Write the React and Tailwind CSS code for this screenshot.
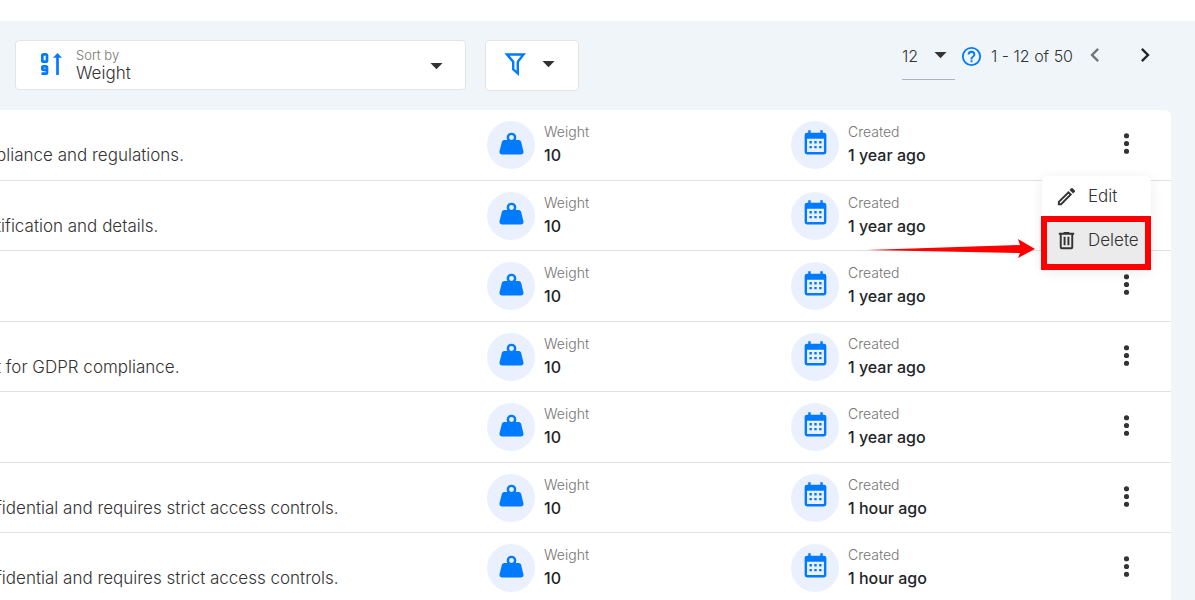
const rows = [
  { text: "pliance and regulations.", created: "1 year ago" },
  { text: "tification and details.", created: "1 year ago" },
  { text: "", created: "1 year ago" },
  { text: "t for GDPR compliance.", created: "1 year ago" },
  { text: "", created: "1 year ago" },
  { text: "fidential and requires strict access controls.", created: "1 hour ago" },
  { text: "fidential and requires strict access controls.", created: "1 hour ago" },
];

const paths = {
  weight:
    "M12 3a4 4 0 0 1 4 4c0 .73-.19 1.41-.54 2H18c.95 0 1.75.67 1.95 1.56C21.96 18.57 22 18.78 22 19a2 2 0 0 1-2 2H4a2 2 0 0 1-2-2c0-.22.04-.43 2.05-8.44C4.25 9.67 5.05 9 6 9h2.54A3.95 3.95 0 0 1 8 7a4 4 0 0 1 4-4m0 2a2 2 0 0 0 0 4 2 2 0 0 0 0-4z",
  calendar:
    "M9 10v2H7v-2h2m4 0v2h-2v-2h2m4 0v2h-2v-2h2m2-7a2 2 0 0 1 2 2v14a2 2 0 0 1-2 2H5a2 2 0 0 1-2-2V5a2 2 0 0 1 2-2h1V1h2v2h8V1h2v2h1m0 16V8H5v11h14M9 14v2H7v-2h2m4 0v2h-2v-2h2m4 0v2h-2v-2h2z",
  caret: "M7 10l5 5 5-5z",
  dots: "M12 16a2 2 0 1 1 0 4 2 2 0 0 1 0-4m0-6a2 2 0 1 1 0 4 2 2 0 0 1 0-4m0-6a2 2 0 1 1 0 4 2 2 0 0 1 0-4z",
  pencil:
    "M14.06 9l.94.94L5.92 19H5v-.92L14.06 9m3.6-6c-.25 0-.51.1-.7.29l-1.83 1.83 3.75 3.75 1.83-1.83c.39-.39.39-1.04 0-1.41l-2.34-2.34c-.2-.2-.45-.29-.71-.29m-3.6 3.19L3 17.25V21h3.75L17.81 9.94l-3.75-3.75z",
  trash:
    "M9 3v1H4v2h1v13a2 2 0 0 0 2 2h10a2 2 0 0 0 2-2V6h1V4h-5V3H9M7 6h10v13H7V6m2 2v9h2V8H9m4 0v9h2V8h-2z",
  help: "M11 18h2v-2h-2v2m1-16A10 10 0 0 0 2 12a10 10 0 0 0 10 10 10 10 0 0 0 10-10A10 10 0 0 0 12 2m0 18c-4.41 0-8-3.59-8-8s3.59-8 8-8 8 3.59 8 8-3.59 8-8 8m0-14a4 4 0 0 0-4 4h2a2 2 0 0 1 2-2 2 2 0 0 1 2 2c0 2-3 1.75-3 5h2c0-2.25 3-2.5 3-5a4 4 0 0 0-4-4z",
  left: "M15.41 16.58L10.83 12l4.58-4.59L14 6l-6 6 6 6 1.41-1.42z",
  right: "M8.59 16.58L13.17 12 8.59 7.41 10 6l6 6-6 6-1.41-1.42z",
};

function Icon({ name, className }) {
  return (
    <svg viewBox="0 0 24 24" fill="currentColor" fillRule="evenodd" aria-hidden="true" className={`shrink-0 ${className}`}>
      <path d={paths[name]} />
    </svg>
  );
}

function SortIcon() {
  return (
    <svg viewBox="0 0 22 24" fill="none" stroke="currentColor" strokeWidth="2.7" aria-hidden="true" className="mb-0.5 h-6 w-[22px] shrink-0 text-[#007bff]">
      <path d="M3.3 2.3h2.400q1.300 0 1.300 1.300v4.800q0 1.300-1.300 1.300H3.600q-1.300 0-1.300-1.300V3.600q0-1.300 1.300-1.300z" />
      <path d="M1.500 21.700h4.200q1.300 0 1.300-1.300v-4.800q0-1.300-1.300-1.300H3.600q-1.300 0-1.300 1.300v.9q0 1.300 1.300 1.300H7" />
      <path d="M17.500 23V4" />
      <path d="M13 5.800L17.500 1 22 5.800z" fill="currentColor" stroke="none" />
    </svg>
  );
}

function FilterIcon() {
  return (
    <svg viewBox="0 0 22 24" fill="none" stroke="currentColor" strokeWidth="2.4" aria-hidden="true" className="mb-[3px] h-6 w-[22px] shrink-0 text-[#007bff]">
      <path d="M3 2.500h16.500l-5.700 7.300v11.500L9.200 17.300V9.800z" strokeLinejoin="miter" />
    </svg>
  );
}

function Stat({ icon, label, value }) {
  return (
    <div className="flex gap-[9px] pt-[11px]">
      <span className="flex size-12 shrink-0 items-center justify-center rounded-full bg-[#eaf0fd] text-[#007bff]">
        <Icon name={icon} className="mb-1 size-[29px]" />
      </span>
      <dl>
        <dt className="text-sm leading-[22px] font-light text-[#757575]">{label}</dt>
        <dd className="text-base leading-6 font-medium text-[#212529]">{value}</dd>
      </dl>
    </div>
  );
}

function ActionMenu() {
  return (
    <div role="menu" className="absolute top-full right-5 z-10 -mt-1 w-[109px] rounded-md bg-white text-[17px] font-light text-[#333] shadow-[0_2px_14px_rgba(0,0,0,0.08)]">
      <button type="button" role="menuitem" className="flex h-10 w-full items-center gap-2.5 px-[13px] pt-0.5">
        <Icon name="pencil" className="size-[23px]" />
        Edit
      </button>
      <button type="button" role="menuitem" className="-ml-px flex h-[54px] w-[110px] items-center gap-2.5 border-[6px] border-[#ff0000] bg-[#ebebeb] pb-1 pl-2">
        <Icon name="trash" className="size-[23px]" />
        Delete
      </button>
      <svg viewBox="0 0 168 20" aria-hidden="true" className="absolute right-[116px] bottom-[11px] h-5 w-[168px]">
        <path d="M0 11L153 6l-2-6 17 10-17 9 2-5z" fill="#ff0000" />
      </svg>
    </div>
  );
}

export default function App() {
  return (
    <div className="h-screen overflow-hidden bg-white pt-[21px] font-['Inter',sans-serif] text-[#333]">
      <main className="min-h-full bg-[#f0f5fa] pr-6">
        <header className="flex items-start pt-[19px] pb-[19px] pl-[15px]">
          <div className="flex h-[50px] w-[451px] items-center rounded border border-[#e2e4e6] bg-white pl-6">
            <SortIcon />
            <div className="relative flex-1 pl-3.5">
              <label htmlFor="sort" className="block text-[13px] leading-4 font-light text-[#757575]">Sort by</label>
              <select id="sort" className="block w-full appearance-none bg-transparent text-[17px] leading-5 font-light outline-none">
                <option>Weight</option>
              </select>
              <Icon name="caret" className="pointer-events-none absolute top-1 right-3.5 size-[29px]" />
            </div>
          </div>
          <button type="button" aria-label="Filter" className="ml-[19px] flex h-[51px] w-[94px] items-center gap-2 rounded border border-[#e2e4e6] bg-white pl-[18px]">
            <FilterIcon />
            <Icon name="caret" className="mb-1 size-[29px]" />
          </button>
          <div className="ml-auto flex items-start text-base font-light">
            <div className="relative w-[53px] border-b border-[#adb5bd]">
              <select aria-label="Items per page" className="block h-[39px] w-full appearance-none bg-transparent pb-[7px] outline-none">
                <option>12</option>
              </select>
              <Icon name="caret" className="pointer-events-none absolute top-0 right-0 size-[29px]" />
            </div>
            <Icon name="help" className="mt-[5px] ml-[5px] size-[23px] text-[#007bff]" />
            <span className="ml-2 leading-8">1 - 12 of 50</span>
            <button type="button" aria-label="Previous page" className="mt-px ml-2 text-[#757575]">
              <Icon name="left" className="size-[28px]" />
            </button>
            <button type="button" aria-label="Next page" className="mt-px mr-3 ml-[22px] text-[#212529]">
              <Icon name="right" className="size-[28px]" />
            </button>
          </div>
        </header>

        <ul className="grid min-h-[494px] auto-rows-fr rounded-tr-md bg-white">
          {rows.map((row, i) => (
            <li key={i} className="relative grid grid-cols-[487fr_304fr_290fr_90px] border-b border-[#e0e0e0]">
              <p className="-ml-1 pt-[33px] text-[17px] leading-6 font-light whitespace-nowrap">{row.text}</p>
              <Stat icon="weight" label="Weight" value="10" />
              <Stat icon="calendar" label="Created" value={row.created} />
              {i !== 1 && (
                <button type="button" aria-label="Row actions" className="flex justify-center pt-[18px]">
                  <Icon name="dots" className="size-[31px]" />
                </button>
              )}
              {i === 0 && <ActionMenu />}
            </li>
          ))}
        </ul>
      </main>
    </div>
  );
}
